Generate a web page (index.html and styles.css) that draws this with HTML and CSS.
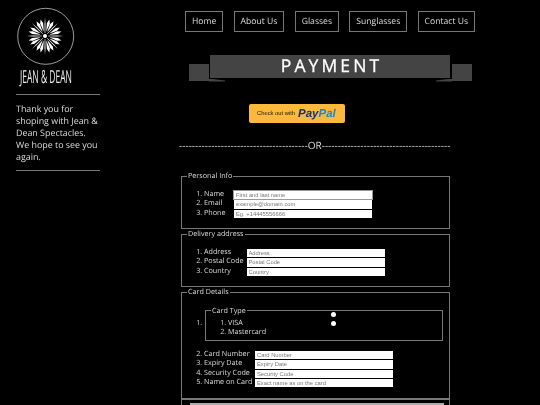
FILE: index.html
```html
<!DOCTYPE html>
<html lang="en">
<head>
<meta charset="utf-8">
<title>Payment</title>
<link rel="stylesheet" href="styles.css">
</head>
<body>
<div class="page">
  <aside class="sidebar">
    <svg class="logo" viewBox="0 0 60 78" width="60" height="78" aria-label="Jean and Dean logo">
      <defs>
        <path id="wedge" d="M-0.1 -5 L-1.5 -13 L0 -17 L1.5 -13 L0.1 -5Z"/>
        <path id="spoke" d="M-0.3 -3 L-0.5 -12 L0 -18.5 L0.5 -12 L0.3 -3Z"/>
      </defs>
      <circle cx="29.7" cy="28.3" r="28" fill="none" stroke="#ddd" stroke-width="0.7"/>
      <g fill="#fff" transform="translate(29 28)">
        <use href="#spoke"/>
        <use href="#wedge" transform="rotate(15)"/>
        <use href="#wedge" transform="rotate(30)"/>
        <use href="#spoke" transform="rotate(45)"/>
        <use href="#wedge" transform="rotate(60)"/>
        <use href="#wedge" transform="rotate(75)"/>
        <use href="#spoke" transform="rotate(90)"/>
        <use href="#wedge" transform="rotate(105)"/>
        <use href="#wedge" transform="rotate(120)"/>
        <use href="#spoke" transform="rotate(135)"/>
        <use href="#wedge" transform="rotate(150)"/>
        <use href="#wedge" transform="rotate(165)"/>
        <use href="#spoke" transform="rotate(180)"/>
        <use href="#wedge" transform="rotate(195)"/>
        <use href="#wedge" transform="rotate(210)"/>
        <use href="#spoke" transform="rotate(225)"/>
        <use href="#wedge" transform="rotate(240)"/>
        <use href="#wedge" transform="rotate(255)"/>
        <use href="#spoke" transform="rotate(270)"/>
        <use href="#wedge" transform="rotate(285)"/>
        <use href="#wedge" transform="rotate(300)"/>
        <use href="#spoke" transform="rotate(315)"/>
        <use href="#wedge" transform="rotate(330)"/>
        <use href="#wedge" transform="rotate(345)"/>
        <circle r="2"/>
      </g>
      <text x="4" y="74.5" textLength="52" lengthAdjust="spacingAndGlyphs" class="logo-text">JEAN &amp; DEAN</text>
    </svg>
    <hr class="rule">
    <p class="thanks">Thank you for shoping with Jean &amp; Dean Spectacles. We hope to see you again.</p>
    <hr class="rule">
  </aside>
  <main class="main">
    <nav class="nav">
      <a class="nav-item">Home</a>
      <a class="nav-item">About Us</a>
      <a class="nav-item">Glasses</a>
      <a class="nav-item">Sunglasses</a>
      <a class="nav-item">Contact Us</a>
    </nav>
    <div class="banner">
      <span class="tail"></span>
      <h1 class="banner-main">PAYMENT</h1>
      <span class="tail"></span>
    </div>
    <a class="paypal"><span class="pp-check">Check out with</span><span class="pp-logo"><b>Pay</b><i>Pal</i></span></a>
    <div class="or">----------------------------------------OR----------------------------------------</div>
    <form class="form">
      <fieldset class="group group-personal">
        <legend>Personal Info</legend>
        <ol class="fields">
          <li><label class="w-a">Name</label><input class="first" placeholder="First and last name"></li>
          <li><label class="w-a">Email</label><input placeholder="example@domain.com"></li>
          <li><label class="w-a">Phone</label><input placeholder="Eg. +14445556666"></li>
        </ol>
      </fieldset>
      <fieldset class="group group-personal">
        <legend>Delivery address</legend>
        <ol class="fields">
          <li><label class="w-b">Address</label><input placeholder="Address"></li>
          <li><label class="w-b">Postal Code</label><input placeholder="Postal Code"></li>
          <li><label class="w-b">Country</label><input placeholder="Country"></li>
        </ol>
      </fieldset>
      <fieldset class="group group-card">
        <legend>Card Details</legend>
        <ol class="fields">
          <li class="type-row">
            <fieldset class="inner">
              <legend>Card Type</legend>
              <ol class="fields inner-list">
                <li><label class="w-r">VISA</label><input class="radio" type="radio" name="card"></li>
                <li><label class="w-r">Mastercard</label><input class="radio" type="radio" name="card"></li>
              </ol>
            </fieldset>
          </li>
          <li><label class="w-c">Card Number</label><input placeholder="Card Number"></li>
          <li><label class="w-c">Expiry Date</label><input placeholder="Expiry Date"></li>
          <li><label class="w-c">Security Code</label><input placeholder="Security Code"></li>
          <li><label class="w-c">Name on Card</label><input placeholder="Exact name as on the card"></li>
        </ol>
      </fieldset>
      <fieldset class="group group-submit">
        <button class="buy" type="button" aria-label="Buy now"></button>
      </fieldset>
    </form>
  </main>
</div>
</body>
</html>
```
FILE: styles.css
```css
* { box-sizing: border-box; }
html, body { margin: 0; height: 405px; overflow: hidden; background: #000; }
body { font-family: "Open Sans", "DejaVu Sans", sans-serif; color: #ddd; font-size: 7.2px; text-rendering: geometricPrecision; }
.page { display: flex; align-items: flex-start; height: 405px; overflow: hidden; will-change: transform; }

.sidebar { width: 100px; margin-left: 16px; flex: none; padding-top: 8px; }
.logo { display: block; overflow: visible; }
.logo-text { font-family: "Open Sans", sans-serif; font-weight: 400; font-size: 18px; fill: #eee; }
.rule { border: 0; height: 1px; background: #777; margin: 8px 0 0; width: 84px; }
.thanks { margin: 8px 0 7px; width: 84px; font-size: 8.9px; line-height: 12px; color: #ddd; }
.thanks + .rule { margin-top: 0; }

.main { flex: none; width: 424px; display: flex; flex-direction: column; }
.nav { display: flex; margin: 11px 0 0 69px; gap: 10.3px; }
.nav-item { height: 21px; padding: 0 6px; border: 1px solid #777; line-height: 19px; font-size: 8.6px; color: #ddd; }

.banner { display: flex; align-items: flex-start; margin: 23px 0 0 73px; width: 283px; height: 26px; }
.tail { width: 20px; height: 17px; margin-top: 9px; background: #444; flex: none; }
.banner-main { position: relative; flex: none; width: 240px; height: 23px; margin: 0 2px 0 1px; padding-left: 3px; background: #444; color: #fff; text-align: center; font-size: 17.5px; line-height: 22px; font-weight: 400; letter-spacing: 3.1px; -webkit-text-stroke: 0.3px #fff; }
.banner-main::before, .banner-main::after { content: ""; position: absolute; top: 23.5px; width: 16px; height: 3px; background: #444; }
.banner-main::before { left: -1px; clip-path: polygon(0 0, 100% 70%, 100% 100%, 0 100%); }
.banner-main::after { right: -2px; clip-path: polygon(100% 0, 0 70%, 0 100%, 100% 100%); }

.paypal { display: flex; align-items: center; align-self: flex-start; margin: 23px 0 0 133px; width: 96px; height: 19px; padding-left: 8px; background: #fcb93c; border-radius: 2px; }
.pp-check { font-family: "Liberation Sans", sans-serif; font-size: 5.8px; color: #111; white-space: nowrap; }
.pp-logo { font-family: "Liberation Sans", sans-serif; font-size: 11.5px; font-style: italic; font-weight: 700; margin-left: 3px; white-space: nowrap; }
.pp-logo b { color: #11307f; }
.pp-logo i { color: #1b88c9; }

.or { margin: 16px 0 0 63px; width: 276px; height: 13px; line-height: 13px; font-size: 10px; white-space: nowrap; overflow: hidden; color: #ddd; }

.form { display: flex; flex-direction: column; margin: 19px 0 0 65px; width: 269px; }
.group { margin: 0; padding: 10px 0 0; border: 1px solid #777; min-width: 0; }
.group > .fields { padding-left: 22px; }
.group-personal { height: 58px; }
.group-card { height: 111.5px; }
.group legend, .inner legend { padding: 0 1px; margin-left: 5px; font-size: 7.2px; line-height: 10px; color: #ddd; }
.group-submit { padding: 3px 0 0 8px; height: 30px; }

.fields { margin: 0; padding: 0; list-style: decimal; }
.fields > li { height: 9.33px; line-height: 7.5px; white-space: nowrap; font-size: 7.2px; }
.fields label { display: inline-block; }
.w-a { width: 30px; }
.w-b { width: 42.5px; }
.w-c { width: 51px; }
.w-r { width: 102.5px; }

input { height: 8.2px; width: 138px; padding: 0 2px; margin: 0; border: 0; background: #fff; font-family: "Liberation Sans", sans-serif; font-size: 5.8px; vertical-align: top; border-radius: 0; outline: 0; }
input::placeholder { color: #777; opacity: 1; }
input.first { outline: 1px solid #999; }

.fields > li.type-row { height: auto; margin: -1.5px 0 10px; }
.inner { margin: 0 0 0 1px; padding: 4.5px 0 0; width: 238px; height: 35.5px; border: 1px solid #777; min-width: 0; }
.inner-list { padding-left: 22px; }
.radio { appearance: none; width: 5px; height: 5px; border-radius: 50%; background: #fff; padding: 0; transform: translateY(-9px); vertical-align: middle; }

.buy { display: block; width: 254px; height: 20px; border: 0; padding: 0; background: #aaa; }
```
